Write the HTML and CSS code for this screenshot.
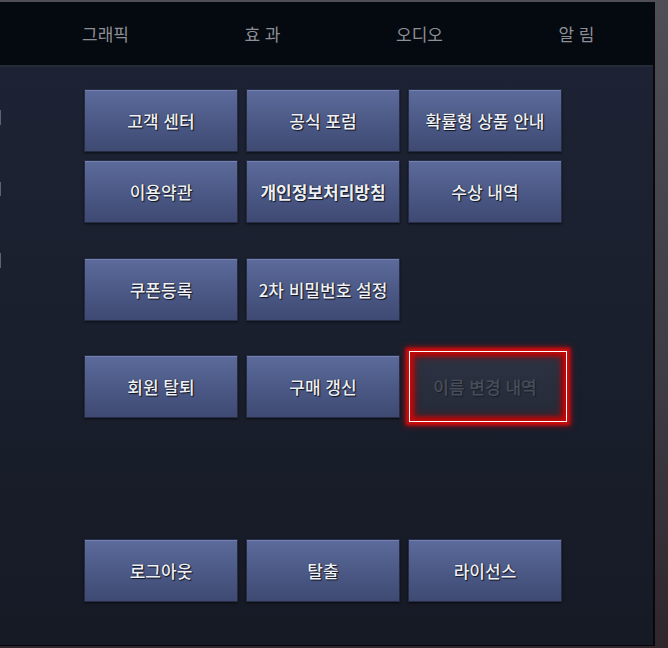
FILE: index.html
```html
<!DOCTYPE html>
<html lang="ko">
<head>
    <meta charset="UTF-8">
    <title>설정</title>
    <link rel="stylesheet" href="styles.css">
</head>
<body>
    <div class="frame">
        <nav class="tabs">
            <span>그래픽</span>
            <span>효 과</span>
            <span>오디오</span>
            <span>알 림</span>
        </nav>

        <div class="panel">
            <div class="side">
                <i class="stub s1"></i>
                <i class="stub s2"></i>
                <i class="stub s3"></i>
            </div>

            <div class="menu">
                <div class="group g1">
                    <button>고객 센터</button>
                    <button>공식 포럼</button>
                    <button>확률형 상품 안내</button>
                    <button>이용약관</button>
                    <button class="strong">개인정보처리방침</button>
                    <button>수상 내역</button>
                </div>

                <div class="group g2">
                    <button>쿠폰등록</button>
                    <button>2차 비밀번호 설정</button>
                </div>

                <div class="group g3">
                    <button>회원 탈퇴</button>
                    <button>구매 갱신</button>
                    <div class="focus">
                        <button class="off" disabled>이름 변경 내역</button>
                        <span class="ring"></span>
                    </div>
                </div>

                <div class="group g4">
                    <button>로그아웃</button>
                    <button>탈출</button>
                    <button>라이선스</button>
                </div>
            </div>
        </div>
    </div>
</body>
</html>
```

FILE: styles.css
```css
html, body {
    margin: 0;
    height: 648px;
}
body {
    background: linear-gradient(#4f4e57, #3d3b44 60%, #30262c);
    font-family: "Noto Sans CJK KR", "Noto Sans", sans-serif;
    padding-top: 2px;
    box-sizing: border-box;
    overflow: hidden;
}
.frame {
    width: 655px;
    height: 644px;
    box-sizing: border-box;
    border-right: 2px solid #08080c;
    border-bottom: 1px solid #08080c;
    display: flex;
    flex-direction: column;
}
.tabs {
    height: 63px;
    background: #050910;
    display: grid;
    grid-template-columns: repeat(4, 157px);
    padding-left: 27px;
    align-items: center;
    color: #8d8f96;
    font-size: 17px;
    padding-bottom: 1px;
    box-sizing: border-box;
}
.tabs span {
    text-align: center;
}
.panel {
    flex: 1;
    border-top: 2px solid #262b38;
    background: linear-gradient(#1d2334, #1a1f2d 50%, #161a25);
    display: flex;
}
.side {
    width: 2px;
    display: flex;
    flex-direction: column;
    padding-top: 43px;
}
.stub {
    display: block;
    width: 1px;
    height: 15px;
    background: #5c6272;
}
.s2 { margin-top: 57px; height: 14px; }
.s3 { margin-top: 57px; }
.menu {
    padding: 22px 0 0 82px;
}
.group {
    display: grid;
    grid-template-columns: repeat(3, 154px);
    grid-auto-rows: 63px;
    gap: 8px;
}
.g2 { margin-top: 35px; }
.g3 { margin-top: 34px; }
.g4 { margin-top: 121px; }
button {
    font-family: inherit;
    font-size: 17px;
    font-weight: 500;
    color: #eef0f6;
    text-shadow: 1px 1px 1px #10141f, 0 0 1px #10141f;
    background: linear-gradient(#5c6b9b, #4b5885 55%, #3e4a72);
    border: 1px solid #262d45;
    box-shadow: inset 0 1px 0 rgba(160, 175, 220, 0.35), 0 1px 2px rgba(0, 0, 0, 0.6);
    padding: 0;
    margin: 0;
    height: 63px;
}
.strong {
    font-weight: 700;
}
.focus {
    position: relative;
    display: flex;
}
.focus button {
    flex: 1;
}
.off {
    color: #484d5a;
    text-shadow: 1px 1px 1px #1a1e29;
    background: linear-gradient(#2c3242, #262b39);
    border-color: #1c2130;
    box-shadow: none;
}
.ring {
    position: absolute;
    left: 1px;
    right: -5px;
    top: -4px;
    bottom: -4px;
    border: 1px solid #ffffff;
    box-shadow: 0 0 3px 3px #d20c0c, 0 0 6px 4px rgba(200, 10, 10, 0.6), inset 0 0 4px 4px #c00a0a, inset 0 0 8px 5px rgba(150, 8, 8, 0.5);
}
```
